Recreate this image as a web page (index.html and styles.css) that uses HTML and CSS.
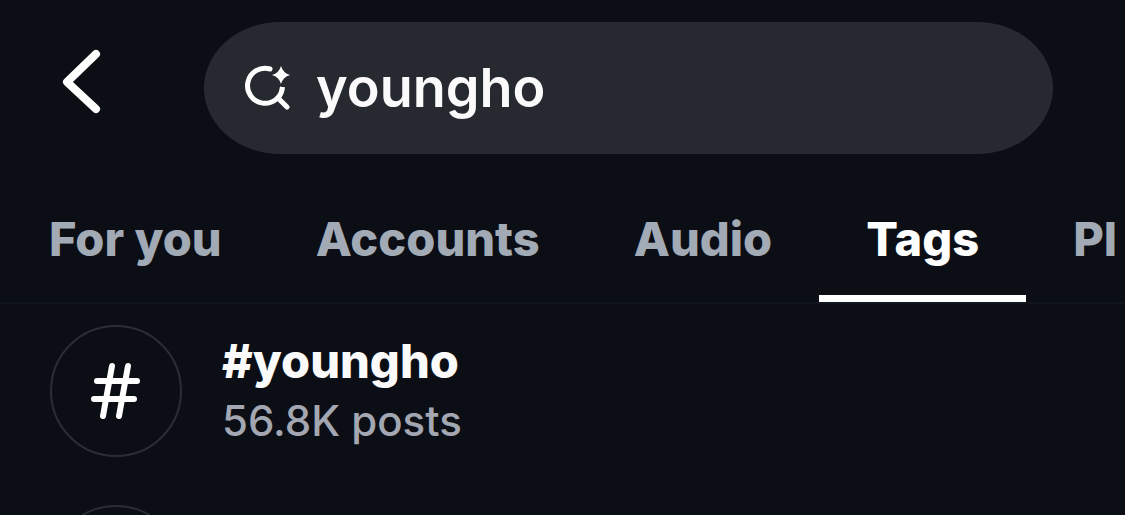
FILE: index.html
```html
<!DOCTYPE html>
<html lang="en">
<head>
<meta charset="utf-8">
<meta name="viewport" content="width=device-width, initial-scale=1">
<title>Search</title>
<link rel="stylesheet" href="styles.css">
</head>
<body>
<div class="screen">
  <header class="top-bar">
    <button class="back" type="button" aria-label="Back">
      <svg width="48" height="72" viewBox="0 0 48 72" aria-hidden="true"><path d="M38 8L9 36l29 27"/></svg>
    </button>
    <label class="search">
      <svg class="search-icon" width="48" height="48" viewBox="0 0 48 48" role="img" aria-label="Search">
        <path class="stroke" d="M26 5A17.500 17.500 0 1 0 38.500 23Q38 29 34 34L43 43"/>
        <path class="spark" d="M37 2Q39 9 46 11Q39 13 37 20Q35 13 28 11Q35 9 37 2Z"/>
      </svg>
      <input class="search-input" type="text" value="youngho" spellcheck="false">
    </label>
  </header>
  <nav class="tabs">
    <button class="tab" type="button">For you</button>
    <button class="tab" type="button">Accounts</button>
    <button class="tab" type="button">Audio</button>
    <button class="tab tab-active" type="button" aria-current="page">Tags</button>
    <button class="tab" type="button">Pl</button>
  </nav>
  <main class="results">
    <article class="result">
      <span class="badge">
        <svg width="56" height="64" viewBox="0 0 56 64" aria-hidden="true"><path d="M24 7L15 57M40 7L31 57M9 22H49M6 40H46"/></svg>
      </span>
      <div class="result-text">
        <h2 class="result-title">#youngho</h2>
        <p class="result-count">56.8K posts</p>
      </div>
    </article>
    <article class="result">
      <span class="badge"></span>
    </article>
  </main>
</div>
</body>
</html>
```

FILE: styles.css
```css
* {
  box-sizing: border-box;
}

body {
  margin: 0;
  background: #0b0e15;
  color: #fafafb;
  font-family: Inter, "Liberation Sans", sans-serif;
}

button {
  border: 0;
  padding: 0;
  background: none;
  color: inherit;
  font: inherit;
}

.screen {
  height: 100vh;
  overflow: hidden;
}

.top-bar {
  display: flex;
  align-items: center;
  padding: 22px 72px 0 58px;
}

.back {
  display: flex;
  flex: none;
  height: 84px;
  margin-right: 98px;
  align-self: flex-start;
  padding-top: 24px;
}

.back svg {
  fill: none;
  stroke: #fff;
  stroke-width: 8;
  stroke-linecap: round;
  stroke-linejoin: round;
}

.search {
  display: flex;
  flex: 1;
  align-items: center;
  gap: 24px;
  min-width: 0;
  height: 132px;
  padding: 0 40px;
  border-radius: 76px / 66px;
  background: #26292f;
}

.search-icon {
  flex: none;
}

.stroke {
  fill: none;
  stroke: #fff;
  stroke-width: 5;
  stroke-linecap: round;
}

.spark {
  fill: #fff;
}

.search-input {
  flex: 1;
  min-width: 0;
  padding: 0;
  border: 0;
  outline: 0;
  background: none;
  color: inherit;
  font: 600 54px/72px Inter, "Liberation Sans", sans-serif;
}

.tabs {
  display: flex;
  height: 150px;
  padding-left: 2px;
  border-bottom: 2px solid #11151d;
  overflow: hidden;
}

.tab {
  flex: none;
  padding: 28px 47px 0;
  border-bottom: 7px solid transparent;
  color: #a2aab6;
  font-size: 47px;
  font-weight: 800;
  white-space: nowrap;
}

.tab-active {
  border-color: #fff;
  color: #fff;
}

.results {
  display: grid;
  gap: 48px;
  padding: 21px 50px;
}

.result {
  display: flex;
  align-items: center;
  gap: 40px;
}

.badge {
  display: flex;
  flex: none;
  align-items: center;
  justify-content: center;
  width: 132px;
  height: 132px;
  border: 2px solid #2a2d35;
  border-radius: 50%;
}

.badge svg {
  fill: none;
  stroke: #fff;
  stroke-width: 6;
  stroke-linecap: round;
}

.result-title,
.result-count {
  margin: 0;
  line-height: 60px;
}

.result-title {
  font-size: 47px;
  font-weight: 800;
}

.result-count {
  color: #a2a7b2;
  font-size: 42px;
  font-weight: 500;
}
```
